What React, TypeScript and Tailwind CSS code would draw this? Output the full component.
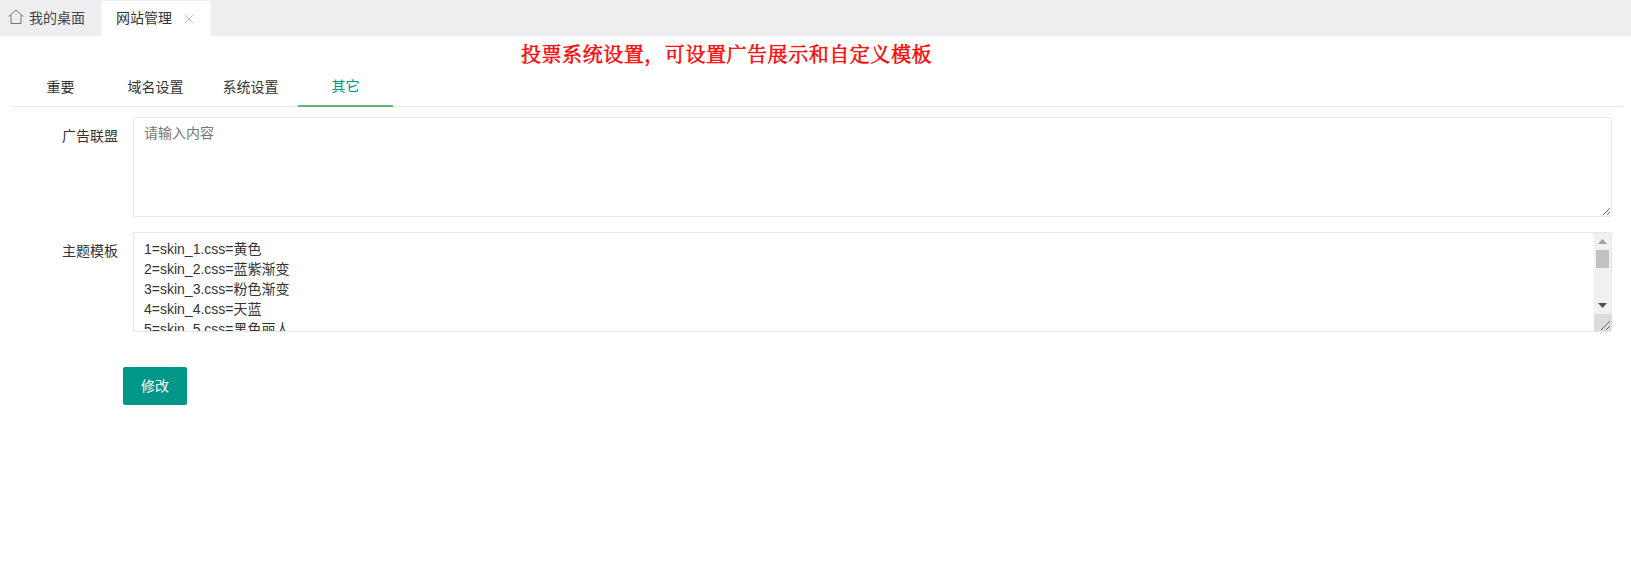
const skinLines = [
  "1=skin_1.css=黄色",
  "2=skin_2.css=蓝紫渐变",
  "3=skin_3.css=粉色渐变",
  "4=skin_4.css=天蓝",
  "5=skin_5.css=黑色丽人",
  "6=skin_6.css=红色",
  "7=skin_7.css=绿色",
  "8=skin_8.css=紫色",
  "9=skin_9.css=橙色",
  "10=skin_10.css=青色",
].join("\n");

const font = "[font-family:'Liberation_Sans','Noto_Sans_CJK_SC',sans-serif]";

function FormRow({ label, children }: { label: string; children: React.ReactNode }) {
  return (
    <div className="flex items-start">
      <label className="w-[133px] shrink-0 pr-[15px] pt-[9px] text-right text-[14px] leading-[20px] text-[#333]">{label}</label>
      {children}
    </div>
  );
}

function ScrollbarOverlay() {
  return (
    <div className="pointer-events-none absolute bottom-px right-px top-px flex w-[17px] flex-col bg-[#f1f1f1]">
      <div className="flex h-[17px] shrink-0 items-center justify-center">
        <svg width="9" height="5" viewBox="0 0 9 5"><path d="M4.5 0 9 5H0z" fill="#a3a3a3" /></svg>
      </div>
      <div className="mx-[2px] h-[18px] shrink-0 bg-[#c1c1c1]" />
      <div className="flex-1" />
      <div className="flex h-[17px] shrink-0 items-center justify-center">
        <svg width="9" height="5" viewBox="0 0 9 5"><path d="M0 0h9L4.5 5z" fill="#505050" /></svg>
      </div>
      <div className="flex h-[17px] shrink-0 items-end justify-end bg-[#dcdcdc]">
        <svg width="12" height="12" viewBox="0 0 12 12" stroke="#666" strokeWidth="1">
          <path d="M2 11 11 2M7 11l4-4" />
        </svg>
      </div>
    </div>
  );
}

export default function App() {
  const tabs = ["重要", "域名设置", "系统设置"];
  return (
    <div className={`h-[574px] w-[1631px] overflow-hidden bg-white ${font}`}>
      <header className="flex h-[36px] bg-[#eeeef0]">
        <div className="flex w-[101px] items-center pl-[8px] text-[14px] text-[#444]">
          <svg width="16" height="16" viewBox="0 0 16 16" fill="none" stroke="#777" strokeWidth="1" className="mr-[5px] mb-[2px]">
            <path d="M0.5 7.5 8 1l7.5 6.5" />
            <path d="M3 6v8.5h10V6" />
          </svg>
          我的桌面
        </div>
        <div className="mt-px flex w-[110px] items-center bg-white pl-[15px] text-[14px] text-[#333]">
          网站管理
          <svg width="10" height="10" viewBox="0 0 10 10" stroke="#bbb" strokeWidth="1" className="ml-[12px]">
            <path d="M1 1l8 8M9 1l-8 8" />
          </svg>
        </div>
      </header>

      <h1 className="ml-[521px] mt-[5px] h-[28px] text-[20px] font-normal leading-[28px] tracking-[0.55px] text-[#ff0000] [-webkit-text-stroke:0.5px_#ff0000] [font-family:'Liberation_Serif','Noto_Serif_CJK_SC','Noto_Sans_CJK_SC',serif]">
        投票系统设置，可设置广告展示和自定义模板
      </h1>

      <nav className="ml-[13px] mr-[9px] mt-[-3px] flex h-[41px] border-b border-[#e6e6e6] text-[14px]">
        {tabs.map((t) => (
          <div key={t} className="flex h-[40px] w-[95px] items-center justify-center pt-[2px] text-[#333]">{t}</div>
        ))}
        <div className="flex h-[41px] w-[95px] items-center justify-center border-b-2 border-[#5fb878] pt-[2px] text-[#009688]">其它</div>
      </nav>

      <div className="mt-[10px] flex flex-col gap-[15px] pr-[19px]">
        <FormRow label="广告联盟">
          <textarea
            placeholder="请输入内容"
            className="h-[100px] flex-1 rounded-[2px] border border-[#e6e6e6] px-[10px] pb-[6px] pt-[5px] text-[14px] leading-[20px] text-[#333] outline-none placeholder:text-[#757575]"
          />
        </FormRow>
        <FormRow label="主题模板">
          <div className="relative h-[100px] flex-1">
            <textarea
              readOnly
              value={skinLines}
              className="block h-full w-full resize-none overflow-hidden rounded-[2px] border border-[#e6e6e6] px-[10px] py-[6px] text-[14px] leading-[20px] text-[#333] outline-none"
            />
            <ScrollbarOverlay />
          </div>
        </FormRow>
      </div>

      <button className="ml-[123px] mt-[35px] block h-[38px] w-[64px] rounded-[2px] bg-[#009688] text-[14px] text-white">修改</button>
    </div>
  );
}
